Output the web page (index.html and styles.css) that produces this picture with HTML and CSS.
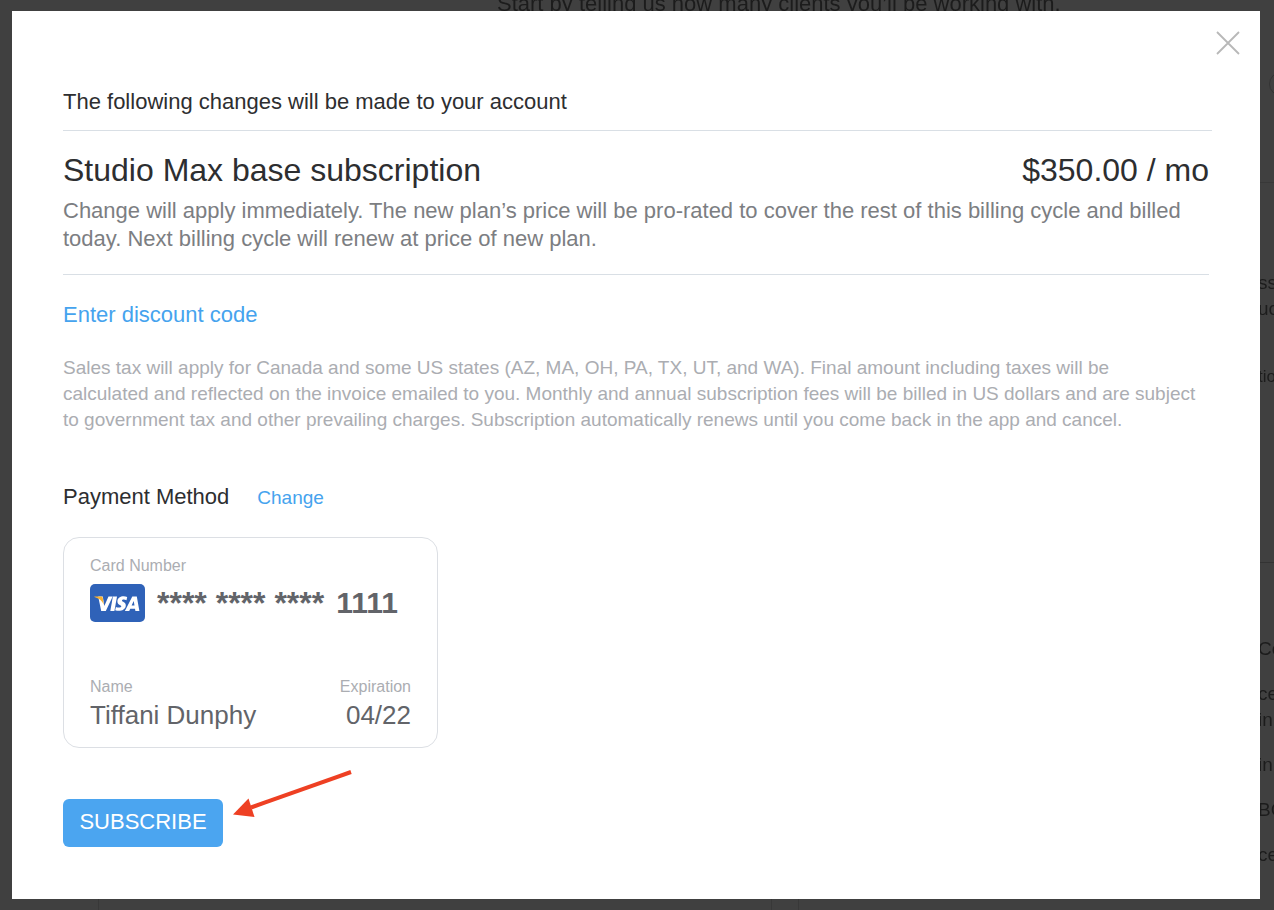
FILE: index.html
```html
<!DOCTYPE html>
<html lang="en">
<head>
<meta charset="utf-8">
<title>Confirm subscription</title>
<link rel="stylesheet" href="styles.css">
</head>
<body>
<div class="page" aria-hidden="true">
  <p class="page-lead">Start by telling us how many clients you’ll be working with.</p>
  <div class="page-frames"><span class="frame"></span><span class="frame"></span></div>
  <div class="page-side">
    <span class="ring"></span>
    <p class="side-block side-plan">ss<br>uc</p>
    <p class="side-block side-option">tio</p>
    <ul class="side-list">
      <li>Co</li>
      <li>ce<br>in</li>
      <li>in</li>
      <li>BC</li>
      <li>ce</li>
    </ul>
  </div>
</div>

<main class="modal" role="dialog" aria-labelledby="modal-title">
  <button class="close" type="button" aria-label="Close">
    <svg viewBox="0 0 24 24" width="24" height="24"><path d="M1 1 23 23M23 1 1 23" fill="none" stroke="#b8b8b8" stroke-width="1.8"/></svg>
  </button>
  <h1 class="intro" id="modal-title">The following changes will be made to your account</h1>
  <section class="plan">
    <div class="plan-head">
      <h2 class="plan-name">Studio Max base subscription</h2>
      <span class="plan-price">$350.00 / mo</span>
    </div>
    <p class="plan-note">Change will apply immediately. The new plan’s price will be pro-rated to cover the rest of this billing cycle and billed today. Next billing cycle will renew at price of new plan.</p>
  </section>
  <a class="discount" href="#">Enter discount code</a>
  <p class="tax">Sales tax will apply for Canada and some US states (AZ, MA, OH, PA, TX, UT, and WA). Final amount including taxes will be<br>calculated and reflected on the invoice emailed to you. Monthly and annual subscription fees will be billed in US dollars and are subject<br>to government tax and other prevailing charges. Subscription automatically renews until you come back in the app and cancel.</p>
  <div class="payment-head">
    <h2 class="payment-title">Payment Method</h2>
    <a class="change" href="#">Change</a>
  </div>
  <section class="card">
    <div>
      <span class="label">Card Number</span>
      <div class="number">
        <span class="visa" role="img" aria-label="Visa"><svg viewBox="0 0 55 38" width="55" height="38">
          <g fill="#fff">
            <path d="M8.200 12.600h4.600l1.500 9.300 4.200-9.300h4.200L15.800 27h-4.600Z"/>
            <path d="M22.900 12.600h4.100L24.400 27h-4.100Z"/>
            <path d="M37.200 13l-.7 3.200c-1.700-.8-4.300-1-4.500.2-.2 1.400 4.200 1.500 3.800 5.300-.4 4.400-5.700 6.100-10.600 4.600l.7-3.400c1.900 1 5.200 1 5.400-.4.200-1.700-4.100-1.500-3.900-5.300.3-4.400 5.400-5.900 9.800-4.200Z"/>
            <path d="M42.300 12.600h4.500L49.400 27h-4l-.4-2.300h-4.700L39.200 27h-4.300Zm1.400 4.300-2.100 4.700h2.900Z" fill-rule="evenodd"/>
          </g>
          <path d="M4.400 12.600h6.500c1.200 0 1.700.5 1.900 1.500l1 6.600c-1.600-3.900-4.700-6.500-9.400-7.700Z" fill="#f9b233"/>
        </svg></span>
        <span class="digits">**** **** ****</span>
        <span class="last">1111</span>
      </div>
    </div>
    <div class="holder">
      <div><span class="label">Name</span><div class="value">Tiffani Dunphy</div></div>
      <div class="expiry"><span class="label">Expiration</span><div class="value">04/22</div></div>
    </div>
  </section>
  <div class="actions">
    <button class="subscribe" type="button">SUBSCRIBE</button>
    <svg class="arrow" viewBox="0 0 120 50" width="120" height="50" aria-hidden="true"><path d="M118 3 18 38.500" stroke="#ee4023" stroke-width="4" fill="none"/><path d="M0 45.500 15.500 29.500 21.500 48Z" fill="#ee4023"/></svg>
  </div>
</main>
</body>
</html>
```
FILE: styles.css
```css
* {
  box-sizing: border-box;
}

body {
  margin: 0;
  min-height: 100vh;
  background: #404040;
  color: #2d2e30;
  font-family: "Liberation Sans", Arial, Helvetica, sans-serif;
}

h1, h2, p, ul {
  margin: 0;
  padding: 0;
  font-weight: 400;
}

a {
  color: #45a3ee;
  text-decoration: none;
}

.page {
  position: fixed;
  inset: 0;
  overflow: hidden;
  color: #1c1c1c;
}

.page-lead {
  position: absolute;
  top: -9px;
  left: 497px;
  font-size: 22px;
  line-height: 26px;
  white-space: nowrap;
}

.page-frames {
  position: absolute;
  left: 98px;
  right: 0;
  bottom: 0;
  display: flex;
  gap: 26px;
}

.frame {
  width: 674px;
  height: 12px;
  flex: none;
  border: 1px solid #383838;
  border-width: 0 1px;
}

.page-side {
  position: absolute;
  top: 0;
  right: 0;
  width: 16px;
  font-size: 19px;
  line-height: 26px;
}

.ring {
  display: block;
  width: 24px;
  height: 24px;
  margin: 72px 0 0 11px;
  border: 1px solid #333;
  border-radius: 50%;
}

.side-block {
  white-space: nowrap;
}

.side-plan {
  margin-top: 86px;
  padding-top: 87px;
  border-top: 1px solid #383838;
}

.side-option {
  margin-top: 42px;
  font-size: 17px;
}

.side-list {
  display: grid;
  gap: 19px;
  margin-top: 172px;
  padding-top: 73px;
  border-top: 1px solid #333;
  list-style: none;
}

.modal {
  position: relative;
  min-height: calc(100vh - 22px);
  margin: 11px 14px 11px 12px;
  padding: 76px 51px 50px;
  background: #fff;
}

.close {
  position: absolute;
  top: 20px;
  right: 20px;
  padding: 0;
  border: 0;
  background: none;
  line-height: 0;
  cursor: pointer;
}

.intro {
  margin-right: -3px;
  padding-bottom: 14px;
  border-bottom: 1px solid #d9dfe5;
  font-size: 22px;
  line-height: 29px;
}

.plan {
  padding: 20px 0 21px;
  border-bottom: 1px solid #d9dfe5;
}

.plan-head {
  display: flex;
  justify-content: space-between;
  font-size: 32px;
  line-height: 38px;
}

.plan-name {
  font-size: 32px;
}

.plan-note {
  margin-top: 8px;
  color: #7c7e82;
  font-size: 22px;
  line-height: 28px;
}

.discount {
  display: inline-block;
  margin-top: 26px;
  font-size: 22px;
  line-height: 28px;
}

.tax {
  margin-top: 26px;
  color: #abadb2;
  font-size: 19px;
  line-height: 26px;
}

.payment-head {
  display: flex;
  align-items: baseline;
  gap: 28px;
  margin-top: 50px;
}

.payment-title {
  font-size: 22px;
  line-height: 28px;
}

.change {
  font-size: 19px;
}

.card {
  display: grid;
  gap: 55px;
  width: 375px;
  margin-top: 26px;
  padding: 18px 26px 16px;
  border: 1px solid #dcdfe4;
  border-radius: 16px;
  color: #626469;
}

.label {
  display: block;
  color: #abadb2;
  font-size: 16px;
  line-height: 20px;
}

.number {
  display: flex;
  align-items: center;
  gap: 12px;
  margin-top: 8px;
  font-size: 32px;
  font-weight: 700;
  line-height: 38px;
}

.last {
  font-size: 30px;
}

.visa {
  height: 38px;
  border-radius: 5px;
  background: #2f62b8;
  line-height: 0;
}

.holder {
  display: flex;
  justify-content: space-between;
}

.expiry {
  text-align: right;
}

.value {
  margin-top: 2px;
  font-size: 26px;
  line-height: 32px;
}

.actions {
  display: flex;
  align-items: flex-end;
  gap: 10px;
  margin-top: 21px;
}

.subscribe {
  width: 160px;
  height: 48px;
  padding: 0 0 3px;
  border: 0;
  border-radius: 6px;
  background: #4ba5f0;
  color: #fff;
  font: 22px "Liberation Sans", Arial, sans-serif;
  cursor: pointer;
}

.arrow {
  margin-bottom: 28px;
}
```
